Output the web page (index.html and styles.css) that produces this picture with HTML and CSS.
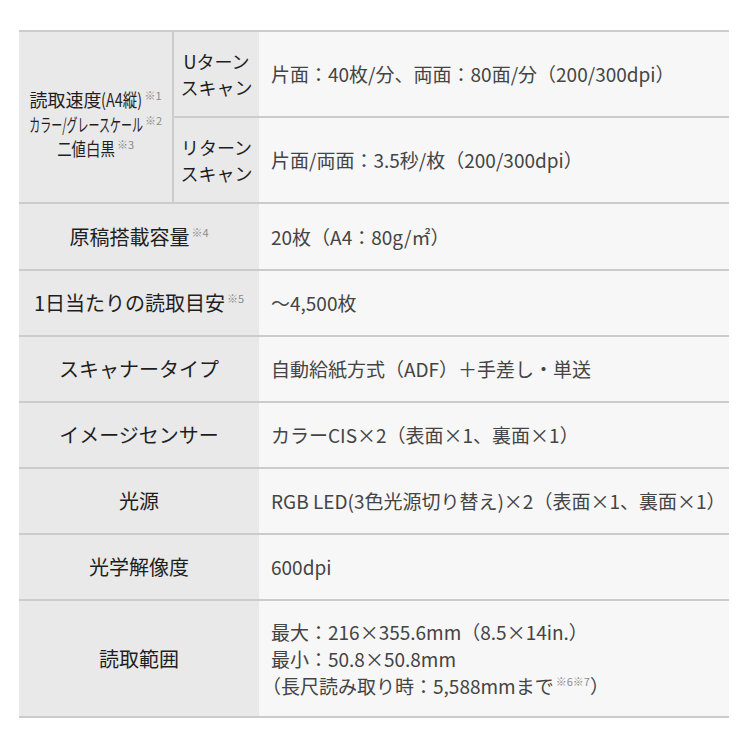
FILE: index.html
```html
<!DOCTYPE html>
<html lang="ja">
<head>
<meta charset="utf-8">
<title>仕様</title>
<link rel="stylesheet" href="styles.css">
</head>
<body>
<div class="spec">
  <div class="cell label speed">
    <div class="stack">
      <div class="ln"><span class="t1">読取速度</span><span class="t1b">(A4縦)</span><sup class="note">※1</sup></div>
      <div class="ln"><span class="t2">カラー/グレースケール</span><sup class="note">※2</sup></div>
      <div class="ln"><span class="t3">二値白黒</span><sup class="note">※3</sup></div>
    </div>
  </div>
  <div class="cell sub"><span class="txt">Uターン<br>スキャン</span></div>
  <div class="cell value"><span class="txt">片面：40枚/分、両面：80面/分（200/300dpi）</span></div>
  <div class="cell sub"><span class="txt">リターン<br>スキャン</span></div>
  <div class="cell value"><span class="txt">片面/両面：3.5秒/枚（200/300dpi）</span></div>

  <div class="cell label wide"><span class="txt">原稿搭載容量<sup class="note">※4</sup></span></div>
  <div class="cell value"><span class="txt">20枚（A4：80g/㎡）</span></div>

  <div class="cell label wide"><span class="txt">1日当たりの読取目安<sup class="note">※5</sup></span></div>
  <div class="cell value"><span class="txt">～4,500枚</span></div>

  <div class="cell label wide"><span class="txt">スキャナータイプ</span></div>
  <div class="cell value"><span class="txt">自動給紙方式（ADF）＋手差し・単送</span></div>

  <div class="cell label wide"><span class="txt">イメージセンサー</span></div>
  <div class="cell value"><span class="txt">カラーCIS×2（表面×1、裏面×1）</span></div>

  <div class="cell label wide"><span class="txt">光源</span></div>
  <div class="cell value"><span class="txt">RGB LED(3色光源切り替え)×2（表面×1、裏面×1）</span></div>

  <div class="cell label wide"><span class="txt">光学解像度</span></div>
  <div class="cell value"><span class="txt">600dpi</span></div>

  <div class="cell label wide"><span class="txt">読取範囲</span></div>
  <div class="cell value"><span class="txt multi">最大：216×355.6mm（8.5×14in.）<br>最小：50.8×50.8mm<br><span class="lp">（</span>長尺読み取り時：5,588mmまで<sup class="note">※6※7</sup>）</span></div>
</div>
</body>
</html>
```

FILE: styles.css
```css
html, body {
  margin: 0;
  padding: 0;
  background: #ffffff;
}

body {
  font-family: "Noto Sans CJK JP", "Noto Sans", sans-serif;
  color: #333333;
}

.spec {
  display: grid;
  grid-template-columns: 153px 87px 1fr;
  grid-template-rows: 86px 86px 67px 66px 66px 66px 66px 66px 117px;
  width: 710px;
  margin: 30px 0 0 19px;
  border-top: 2px solid #cccccc;
}

.cell {
  box-sizing: border-box;
  border-bottom: 2px solid #cccccc;
  display: flex;
  align-items: center;
}

.txt {
  display: block;
  line-height: 28px;
}

.label {
  background: #e9e9e9;
  color: #1e1e1e;
  font-size: 20px;
  font-weight: 400;
  justify-content: center;
  text-align: center;
  white-space: nowrap;
}

.value {
  grid-column: 3;
  background: #f7f7f7;
  color: #444444;
  font-size: 19px;
  font-weight: 400;
  padding-left: 12px;
  white-space: nowrap;
}

.wide {
  grid-column: 1 / span 2;
}

.speed {
  grid-column: 1;
  grid-row: 1 / span 2;
  padding-top: 14px;
}

.stack {
  width: 100%;
}

.ln {
  display: block;
  text-align: center;
  height: 24.5px;
  line-height: 24.5px;
  white-space: nowrap;
}

.t1 {
  font-size: 18px;
}

.t1b {
  display: inline-block;
  font-size: 18px;
  transform: scaleX(0.8);
  margin: 0 -5px;
}

.t2 {
  display: inline-block;
  font-size: 18px;
  transform: scaleX(0.61);
  margin: 0 -36px;
}

.t3 {
  display: inline-block;
  font-size: 18px;
  transform: scaleX(0.8);
  margin: 0 -7px;
}

.sub {
  grid-column: 2;
  background: #e9e9e9;
  border-left: 2px solid #cccccc;
  color: #1e1e1e;
  font-size: 18px;
  justify-content: center;
  text-align: center;
  white-space: nowrap;
}

.sub .txt {
  line-height: 26px;
}

.value .multi {
  line-height: 27px;
}

.lp {
  margin-left: -9px;
}

.note {
  font-size: 11px;
  color: #8c8c8c;
  vertical-align: top;
  line-height: 1;
  position: relative;
  top: 4px;
  margin-left: 2px;
}

.ln .note {
  top: 3px;
}
```
